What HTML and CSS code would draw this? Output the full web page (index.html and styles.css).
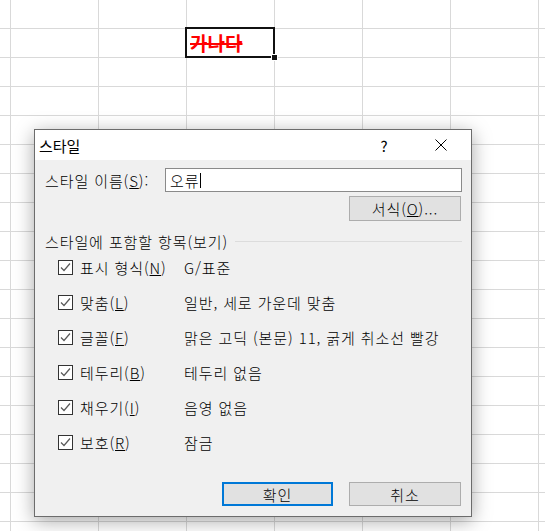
FILE: index.html
```html
<!DOCTYPE html>
<html lang="ko">
<head>
<meta charset="utf-8">
<title>스타일</title>
<link rel="stylesheet" href="styles.css">
</head>
<body>
<div class="sheet">
  <div class="cell-selected">
    <span class="cell-text">가나다</span>
    <span class="fill-handle"></span>
  </div>
</div>

<div class="dialog">
  <div class="titlebar">
    <span class="title">스타일</span>
    <span class="tb-help">?</span>
    <span class="tb-close">
      <svg width="12" height="12" viewBox="0 0 12 12"><path d="M0.5 0.5 L11.5 11.5 M11.5 0.5 L0.5 11.5" stroke="#000" stroke-width="1" fill="none"/></svg>
    </span>
  </div>
  <div class="body">
    <div class="name-row">
      <span class="name-label">스타일 이름(<u>S</u>):</span>
      <div class="input">오류<span class="caret"></span></div>
    </div>
    <div class="format-row">
      <div class="btn btn-format">서식(<u>O</u>)...</div>
    </div>
    <div class="section">스타일에 포함할 항목(보기)</div>
    <div class="items">
      <div class="item">
        <span class="check"><svg width="13" height="13" viewBox="0 0 13 13"><path d="M2 6.5 L5 9.5 L11 2.5" stroke="#5a5a5a" stroke-width="1.2" fill="none"/></svg></span>
        <span class="item-label">표시 형식(<u>N</u>)</span>
        <span class="item-value">G/표준</span>
      </div>
      <div class="item">
        <span class="check"><svg width="13" height="13" viewBox="0 0 13 13"><path d="M2 6.5 L5 9.5 L11 2.5" stroke="#5a5a5a" stroke-width="1.2" fill="none"/></svg></span>
        <span class="item-label">맞춤(<u>L</u>)</span>
        <span class="item-value">일반, 세로 가운데 맞춤</span>
      </div>
      <div class="item">
        <span class="check"><svg width="13" height="13" viewBox="0 0 13 13"><path d="M2 6.5 L5 9.5 L11 2.5" stroke="#5a5a5a" stroke-width="1.2" fill="none"/></svg></span>
        <span class="item-label">글꼴(<u>F</u>)</span>
        <span class="item-value">맑은 고딕 (본문) 11, 굵게 취소선 빨강</span>
      </div>
      <div class="item">
        <span class="check"><svg width="13" height="13" viewBox="0 0 13 13"><path d="M2 6.5 L5 9.5 L11 2.5" stroke="#5a5a5a" stroke-width="1.2" fill="none"/></svg></span>
        <span class="item-label">테두리(<u>B</u>)</span>
        <span class="item-value">테두리 없음</span>
      </div>
      <div class="item">
        <span class="check"><svg width="13" height="13" viewBox="0 0 13 13"><path d="M2 6.5 L5 9.5 L11 2.5" stroke="#5a5a5a" stroke-width="1.2" fill="none"/></svg></span>
        <span class="item-label">채우기(<u>I</u>)</span>
        <span class="item-value">음영 없음</span>
      </div>
      <div class="item">
        <span class="check"><svg width="13" height="13" viewBox="0 0 13 13"><path d="M2 6.5 L5 9.5 L11 2.5" stroke="#5a5a5a" stroke-width="1.2" fill="none"/></svg></span>
        <span class="item-label">보호(<u>R</u>)</span>
        <span class="item-value">잠금</span>
      </div>
    </div>
    <div class="buttons">
      <div class="btn btn-ok">확인</div>
      <div class="btn">취소</div>
    </div>
  </div>
</div>
</body>
</html>
```

FILE: styles.css
```css
* { box-sizing: border-box; }

html, body {
  margin: 0;
  padding: 0;
}

body {
  width: 545px;
  height: 531px;
  overflow: hidden;
  position: relative;
  background: #fff;
  font-family: "Noto Sans CJK KR", "Noto Sans", sans-serif;
  color: #000;
}

.sheet {
  display: grid;
  grid-template-columns: 10px repeat(7, 88px);
  grid-template-rows: 28px repeat(18, 29px);
  width: 545px;
  height: 531px;
  background-image:
    linear-gradient(to right, #d9d9d9 0, #d9d9d9 1px, transparent 1px),
    linear-gradient(to bottom, #d9d9d9 0, #d9d9d9 1px, transparent 1px);
  background-size: 88px 100%, 100% 29px;
  background-position: 10px 0, 0 28px;
}

.cell-selected {
  grid-column: 4;
  grid-row: 2;
  margin: -1px;
  border: 2px solid #111;
  position: relative;
  display: flex;
  align-items: center;
  padding-left: 3px;
  background: #fff;
}

.cell-text {
  font-size: 19px;
  font-weight: 700;
  color: #ff0000;
  text-decoration: line-through;
  text-decoration-thickness: 2px;
  line-height: 1;
}

.fill-handle {
  position: absolute;
  right: -5px;
  bottom: -5px;
  width: 7px;
  height: 7px;
  background: #111;
  border: 1px solid #fff;
}

.dialog {
  position: absolute;
  left: 34px;
  top: 129px;
  width: 438px;
  height: 388px;
  border: 1px solid #6c6c6c;
  background: #f0f0f0;
  box-shadow: 0 4px 18px rgba(0, 0, 0, 0.35);
  display: flex;
  flex-direction: column;
  font-size: 15px;
}

.titlebar {
  height: 30px;
  background: #fff;
  display: flex;
  align-items: center;
  padding-left: 4px;
  flex: none;
}

.title {
  flex: 1;
  font-size: 15px;
  line-height: 1;
}

.tb-help {
  width: 54px;
  text-align: center;
  font-size: 15px;
  line-height: 1;
}

.tb-close {
  width: 60px;
  display: flex;
  justify-content: center;
}

.tb-close svg { display: block; }

.body {
  flex: 1;
  display: flex;
  flex-direction: column;
  padding: 8px 9px 10px 10px;
  letter-spacing: 0.9px;
  font-weight: 300;
}

.name-row {
  display: flex;
  align-items: center;
  height: 24px;
}

.name-label {
  width: 120px;
  line-height: 1;
}

.input {
  flex: 1;
  height: 24px;
  border: 1px solid #8a8a8a;
  background: #fff;
  display: flex;
  align-items: center;
  padding-left: 4px;
  line-height: 1;
}

.caret {
  display: inline-block;
  width: 1px;
  height: 15px;
  background: #000;
  margin-left: 1px;
}

.format-row {
  display: flex;
  justify-content: flex-end;
  margin-top: 4px;
  padding-right: 1px;
}

.btn {
  width: 112px;
  height: 25px;
  background: #e1e1e1;
  border: 1px solid #adadad;
  display: flex;
  align-items: center;
  justify-content: center;
  line-height: 1;
}

.section {
  margin-top: 11px;
  height: 18px;
  display: flex;
  align-items: center;
  line-height: 1;
}

.section::after {
  content: "";
  flex: 1;
  height: 1px;
  background: #dcdcdc;
  margin-left: 7px;
}

.items {
  display: flex;
  flex-direction: column;
  padding-left: 13px;
}

.item {
  height: 35px;
  display: flex;
  align-items: center;
  line-height: 1;
}

.check {
  width: 15px;
  height: 15px;
  border: 1px solid #333;
  background: #fff;
  display: flex;
  align-items: center;
  justify-content: center;
  flex: none;
}

.check svg { display: block; }

.item-label {
  margin-left: 7px;
  width: 104px;
  flex: none;
}

.buttons {
  margin-top: auto;
  display: flex;
  justify-content: flex-end;
  gap: 16px;
  padding-right: 1px;
}

.buttons .btn {
  height: 24px;
}

.btn-ok {
  width: 111px;
  border: 2px solid #0078d7;
}
```
